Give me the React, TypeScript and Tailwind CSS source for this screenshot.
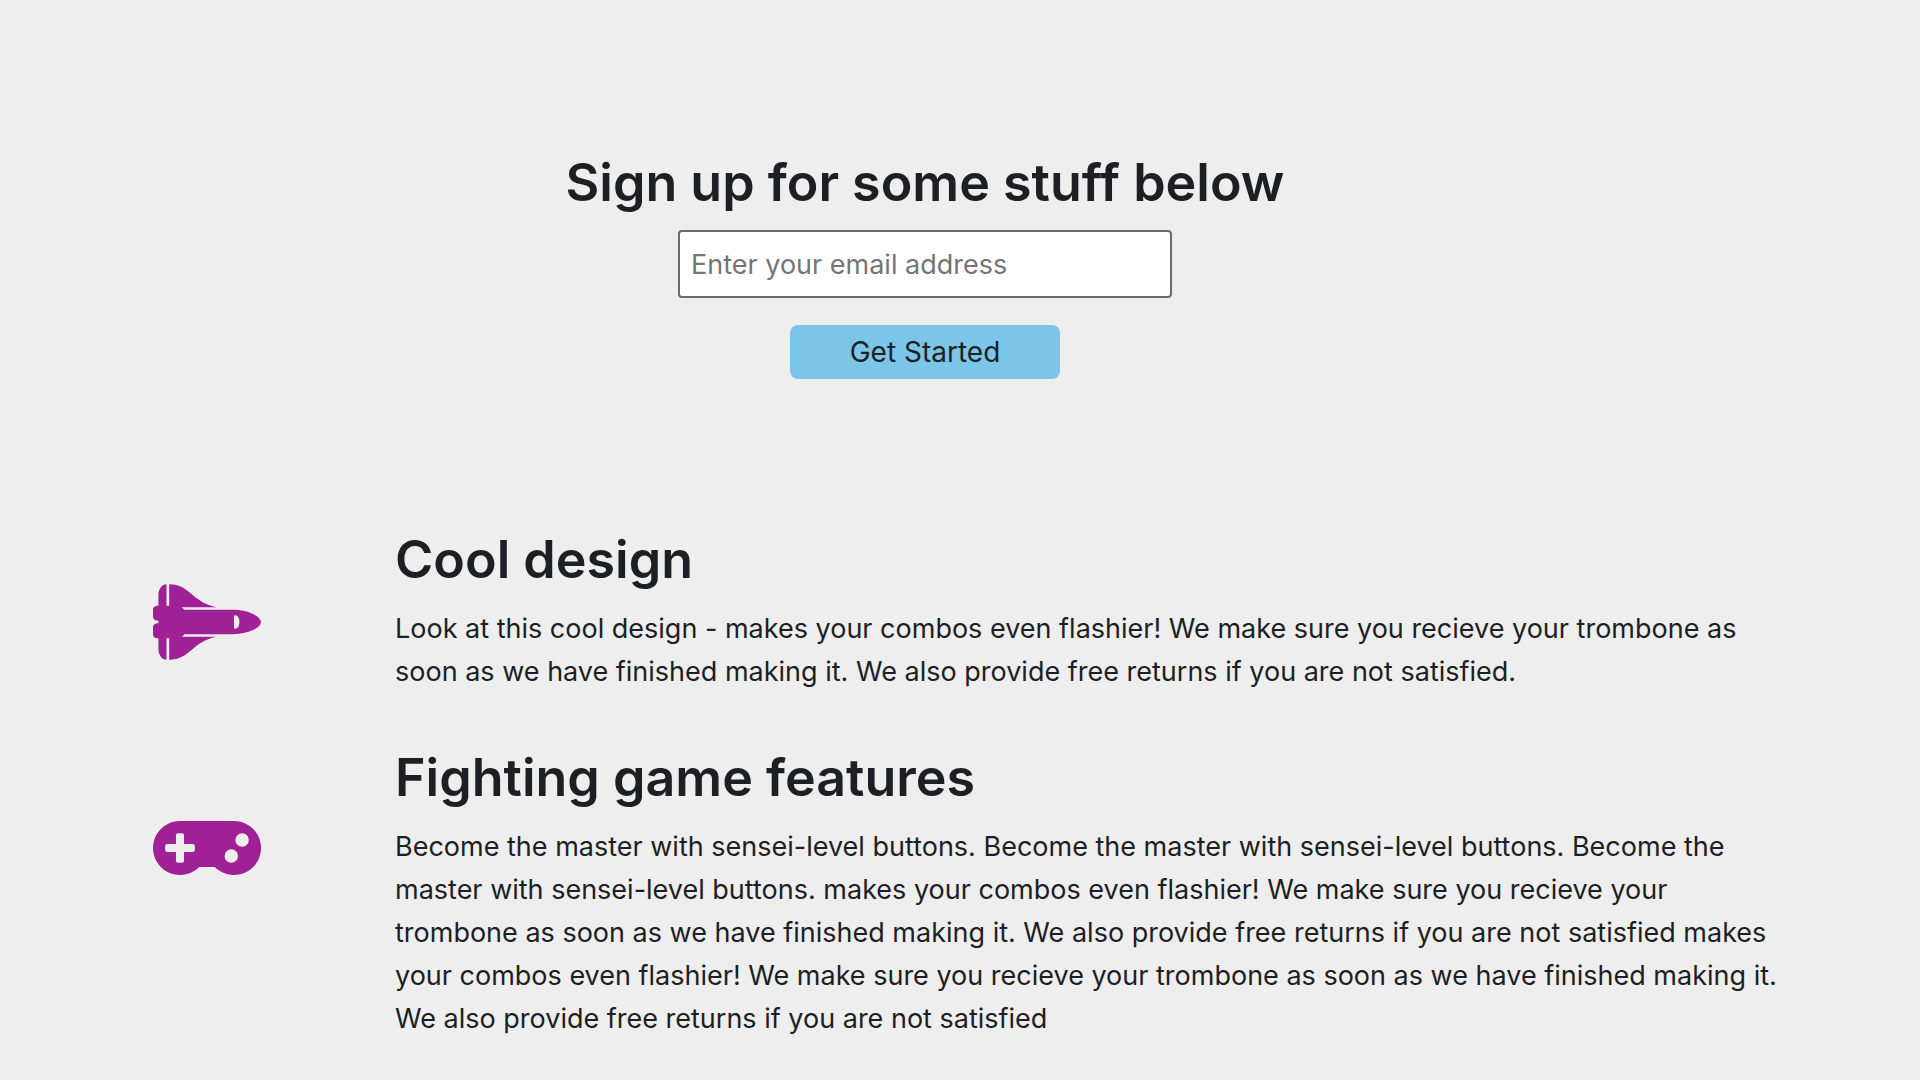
import { FaSpaceShuttle, FaGamepad } from "react-icons/fa";

const features = [
  {
    title: "Cool design",
    icon: FaSpaceShuttle,
    iconSpacing: "mt-10",
    text: "Look at this cool design - makes your combos even flashier! We make sure you recieve your trombone as soon as we have finished making it. We also provide free returns if you are not satisfied.",
  },
  {
    title: "Fighting game features",
    icon: FaGamepad,
    iconSpacing: "mt-12",
    text: "Become the master with sensei-level buttons. Become the master with sensei-level buttons. Become the master with sensei-level buttons. makes your combos even flashier! We make sure you recieve your trombone as soon as we have finished making it. We also provide free returns if you are not satisfied makes your combos even flashier! We make sure you recieve your trombone as soon as we have finished making it. We also provide free returns if you are not satisfied",
  },
];

export default function App() {
  return (
    <main className="min-h-screen bg-[#eeeeee] pt-[151px] font-['Inter',sans-serif] text-[#1c1f23]">
      <form className="flex flex-col items-center pr-[70px]" onSubmit={(e) => e.preventDefault()}>
        <h1 className="text-[52px] leading-[64px] font-semibold">Sign up for some stuff below</h1>
        <input
          type="email"
          aria-label="Email address"
          placeholder="Enter your email address"
          className="mt-[15px] h-[68px] w-[494px] rounded border-2 border-[#6a6a6a] bg-white px-[11px] text-[27px] placeholder:text-[#757575]"
        />
        <button type="submit" className="mt-[27px] h-[54px] w-[270px] rounded-lg bg-[#7ac5e8] text-[28px]">
          Get Started
        </button>
      </form>
      <div className="mt-[149px] flex flex-col gap-[53px] pr-[130px] pl-[153px]">
        {features.map(({ title, icon: Icon, iconSpacing, text }) => (
          <section key={title} className="flex items-start">
            <Icon className={`h-[108px] w-[108px] shrink-0 text-[#a02196] ${iconSpacing}`} />
            <div className="ml-[134px]">
              <h2 className="text-[52px] leading-[64px] font-semibold">{title}</h2>
              <p className="mt-[15px] text-[27px] leading-[43px]">{text}</p>
            </div>
          </section>
        ))}
      </div>
    </main>
  );
}
